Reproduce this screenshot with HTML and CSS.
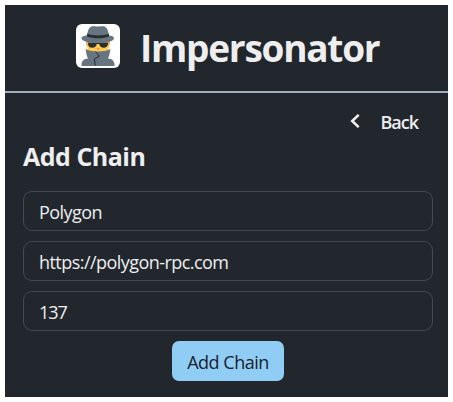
FILE: index.html
```html
<!DOCTYPE html>
<html lang="en">
<head>
<meta charset="utf-8">
<title>Impersonator</title>
<link rel="stylesheet" href="styles.css">
</head>
<body>
<div class="panel">
  <header class="header">
    <div class="logo">
      <svg viewBox="0 0 44 44" width="44" height="44" aria-hidden="true">
        <path fill="#ffcc4d" d="M11 16h22v6c0 5.500-4 9-11 9s-11-3.500-11-9z"/>
        <path fill="#ef9645" d="M10 17h1.500v5c-1 0-1.500-2-1.500-5zM32.500 17h1.500c0 3-.5 5-1.500 5z"/>
        <path fill="#66757f" d="M5.500 42v-1.500c0-3.500 2.500-5.700 6.500-6-1.300-2.500-1.800-5-2.300-9.500 3.500 1.800 7.800 2.500 12.300 2.500s8.800-.7 12.300-2.500c-.5 4.500-1 7-2.300 9.500 4 .3 6.500 2.500 6.500 6v1.500z"/>
        <path fill="none" stroke="#292f33" stroke-width="1" d="M19.500 27.500l3.800 4.700-5 2.800 1 6.500"/>
        <path fill="#292f33" d="M12 18.500h20v1.300c-.2 2.600-1.700 4-4.300 4-2.500 0-4-1.500-4.500-3.800h-2.400c-.5 2.300-2 3.800-4.500 3.800-2.600 0-4.100-1.400-4.300-4z"/>
        <path fill="#e75a70" d="M21 24.200h2l-.5 1.600h-1z"/>
        <path fill="#66757f" d="M5.500 14.200c0-1.500 3-2.400 5.500-2.600 1-5.600 2-8.600 5.500-9.300 2.500-.4 4 .3 5.500.3s3-.7 5.500-.3c3.500.7 4.500 3.700 5.500 9.300 2.500.2 5 1.100 5 2.600 0 3-7 4.800-16 4.800s-16.500-1.800-16.500-4.800z"/>
        <path fill="#292f33" d="M11.200 9.800c3 1.200 7 1.700 10.800 1.700s8-.5 10.800-1.700l.3 2.500c-3 1.500-7 2-11.100 2s-8.300-.5-11.200-2z"/>
      </svg>
    </div>
    <h1 class="title">Impersonator</h1>
  </header>
  <main class="content">
    <button class="back" type="button">
      <svg class="chevron" viewBox="0 0 10 14" width="10" height="14" aria-hidden="true">
        <path d="M8.700 .8L2.200 7l6.500 6.200" fill="none" stroke="#eee" stroke-width="2.500"/>
      </svg>
      <span class="back-label">Back</span>
    </button>
    <h2 class="heading">Add Chain</h2>
    <form class="form">
      <input class="field" type="text" value="Polygon" aria-label="Chain name">
      <input class="field" type="text" value="https://polygon-rpc.com" aria-label="RPC URL">
      <input class="field field-id" type="text" value="137" aria-label="Chain ID">
      <button class="submit" type="button">Add Chain</button>
    </form>
  </main>
</div>
</body>
</html>
```
FILE: styles.css
```css
* {
  box-sizing: border-box;
  margin: 0;
}

body {
  padding: 5px;
  background: #fff;
  color: #eee;
  font-family: "Open Sans", "Noto Sans", sans-serif;
}

button,
input {
  font: inherit;
  color: inherit;
}

.panel {
  width: 443px;
  height: 392px;
  background: #22272e;
}

.header {
  display: flex;
  align-items: center;
  gap: 20px;
  height: 88px;
  padding: 0 0 4px 71px;
  border-bottom: 2px solid #a0aec0;
}

.logo {
  width: 44px;
  height: 44px;
  border-radius: 6px;
  background: #fff;
  overflow: hidden;
}

.logo svg {
  display: block;
}

.title {
  padding-top: 3px;
  font-size: 37px;
  line-height: 48px;
  font-weight: 700;
  letter-spacing: -1.25px;
  white-space: nowrap;
}

.content {
  padding: 8px 15px 0 18px;
}

.back {
  display: flex;
  align-items: center;
  gap: 20px;
  height: 40px;
  margin-left: auto;
  padding: 0 15px 0 0;
  border: 0;
  background: none;
  font-size: 18px;
  font-weight: 600;
  letter-spacing: -1px;
}

.back-label {
  padding-top: 2px;
}

.chevron {
  margin-bottom: 1px;
}

.heading {
  font-size: 25px;
  line-height: 30px;
  font-weight: 700;
  letter-spacing: -0.5px;
}

.form {
  display: flex;
  flex-direction: column;
  align-items: center;
  gap: 10px;
  margin-top: 20px;
}

.field {
  width: 100%;
  height: 40px;
  padding: 2px 15px 0;
  border: 1px solid #444850;
  border-radius: 9px;
  background: transparent;
  font-size: 18px;
  letter-spacing: -0.55px;
}

.field-id {
  letter-spacing: -1px;
}

.submit {
  width: 112px;
  height: 40px;
  padding: 2px 0 0;
  border: 0;
  border-radius: 7px;
  background: #90cdf4;
  color: #1a202c;
  font-size: 18px;
  font-weight: 500;
  letter-spacing: -0.5px;
}
```
